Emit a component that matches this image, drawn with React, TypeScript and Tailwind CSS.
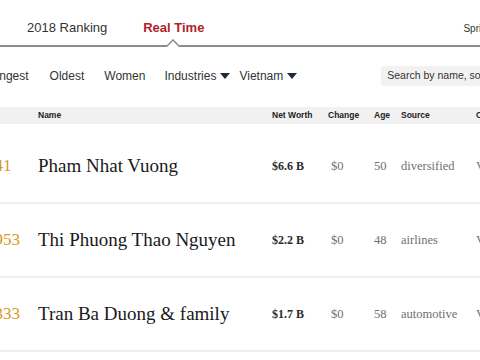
import React from "react";

const sans = { fontFamily: '"Liberation Sans", Arial, sans-serif' };
const serif = { fontFamily: '"Liberation Serif", "DejaVu Serif", serif' };

const rows = [
  { rank: "541", name: "Pham Nhat Vuong", worth: "$6.6 B", change: "$0", age: "50", source: "diversified", c: "Vietnam" },
  { rank: "1953", name: "Thi Phuong Thao Nguyen", worth: "$2.2 B", change: "$0", age: "48", source: "airlines", c: "Vietnam" },
  { rank: "1333", name: "Tran Ba Duong & family", worth: "$1.7 B", change: "$0", age: "58", source: "automotive", c: "Vietnam" },
];

function Caret() {
  return (
    <svg width="10" height="6" viewBox="0 0 10 6" className="inline-block ml-[4px]">
      <path d="M0 0 L10 0 L5 6 Z" fill="#1d2a3f" />
    </svg>
  );
}

export default function App() {
  return (
    <div className="w-[480px] h-[360px] overflow-hidden bg-white text-[#222]" style={sans}>
      <div className="w-[600px]">
        {/* tabs */}
        <div className="relative h-[47px] border-b-2 border-[#8c8c8c] flex items-end pb-[8px]">
          <div className="ml-[27px] text-[13px] text-[#333]">2018 Ranking</div>
          <div className="ml-[36px] text-[13px] font-bold text-[#b0232a]">Real Time</div>
          <div className="ml-[259px] text-[10px] text-[#333] mb-[1px]">Spring 2018</div>
          <svg width="14" height="8" viewBox="0 0 14 8" className="absolute left-[166px] bottom-[-2px]">
            <path d="M0 8 L7 1 L14 8" fill="white" stroke="#8c8c8c" strokeWidth="1.5" />
          </svg>
        </div>
        {/* filters */}
        <div className="h-[54px] pt-[3px] flex items-center text-[12px] text-[#333]">
          <div className="ml-[-21px]">Youngest</div>
          <div className="ml-[21px]">Oldest</div>
          <div className="ml-[20px]">Women</div>
          <div className="ml-[19px] flex items-center">Industries<Caret /></div>
          <div className="ml-[9px] flex items-center">Vietnam<Caret /></div>
          <div className="ml-[84px] h-[20px] w-[180px] bg-[#f2f2f2] rounded-[2px] flex items-center pl-[6px] text-[10.5px] text-[#333]">
            Search by name, source
          </div>
        </div>
        {/* header */}
        <div className="mt-[6px] h-[17px] bg-[#f1f1f1] flex items-center text-[8.5px] font-bold text-[#222]">
          <div className="w-[38px]" />
          <div className="w-[234px]">Name</div>
          <div className="w-[56px]">Net Worth</div>
          <div className="w-[46px]">Change</div>
          <div className="w-[27px]">Age</div>
          <div className="w-[75px]">Source</div>
          <div>Citizenship</div>
        </div>
        <div className="h-[6px]" />
        {rows.map((r) => (
          <div key={r.name} className="h-[74px] border-b-2 border-[#efefef] flex items-center">
            <div className="w-[52px] ml-[-14px] text-[17px] text-[#d39b22]" style={serif}>{r.rank}</div>
            <div className="w-[234px] text-[19px] text-[#1a1a1a] whitespace-nowrap" style={serif}>{r.name}</div>
            <div className="w-[56px] text-[12px] font-bold text-[#2a2a2a]" style={serif}>{r.worth}</div>
            <div className="w-[46px] pl-[3px] text-[12.5px] text-[#6f6f6f]" style={serif}>{r.change}</div>
            <div className="w-[27px] text-[12.5px] text-[#6f6f6f]" style={serif}>{r.age}</div>
            <div className="w-[75px] text-[12.5px] text-[#6f6f6f]" style={serif}>{r.source}</div>
            <div className="text-[12.5px] text-[#6f6f6f]" style={serif}>{r.c}</div>
          </div>
        ))}
      </div>
    </div>
  );
}
